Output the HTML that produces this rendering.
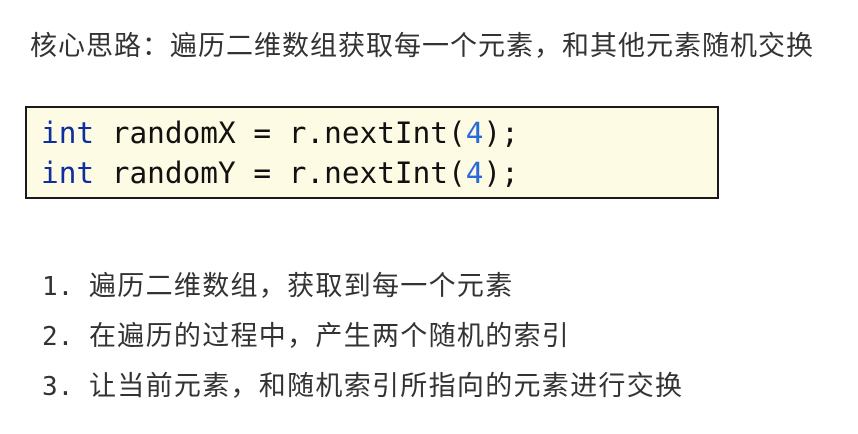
<!DOCTYPE html>
<html><head><meta charset="utf-8"><style>
body{margin:0;width:858px;height:434px;background:#fff;position:relative;overflow:hidden;font-family:"Liberation Sans","Noto Sans CJK SC",sans-serif;color:#333;}
.t{position:absolute;left:30px;top:28px;font-size:27px;letter-spacing:1px;line-height:36px;white-space:nowrap;}
.box{position:absolute;left:25px;top:106px;width:690px;height:89px;border:2px solid #1a1a1a;background:#fefbe4;}
.code{position:absolute;left:14px;top:5px;font-family:"DejaVu Sans Mono","Liberation Mono",monospace;font-size:29.4px;line-height:40px;color:#111;white-space:pre;}
.k{color:#0d2fa0}.n{color:#2a6ad8}
.li{position:absolute;left:42px;font-size:27px;letter-spacing:1.3px;line-height:36px;white-space:nowrap;}
.li span{display:inline-block;width:47px;font-family:"DejaVu Sans Mono",monospace;font-size:26px;letter-spacing:0}
</style></head><body>
<div class="t">核心思路：遍历二维数组获取每一个元素，和其他元素随机交换</div>
<div class="box"><div class="code"><span class="k">int</span> randomX = r.nextInt(<span class="n">4</span>);
<span class="k">int</span> randomY = r.nextInt(<span class="n">4</span>);</div></div>
<div class="li" style="top:268px"><span>1.</span>遍历二维数组，获取到每一个元素</div>
<div class="li" style="top:318px"><span>2.</span>在遍历的过程中，产生两个随机的索引</div>
<div class="li" style="top:368px"><span>3.</span>让当前元素，和随机索引所指向的元素进行交换</div>
</body></html>
